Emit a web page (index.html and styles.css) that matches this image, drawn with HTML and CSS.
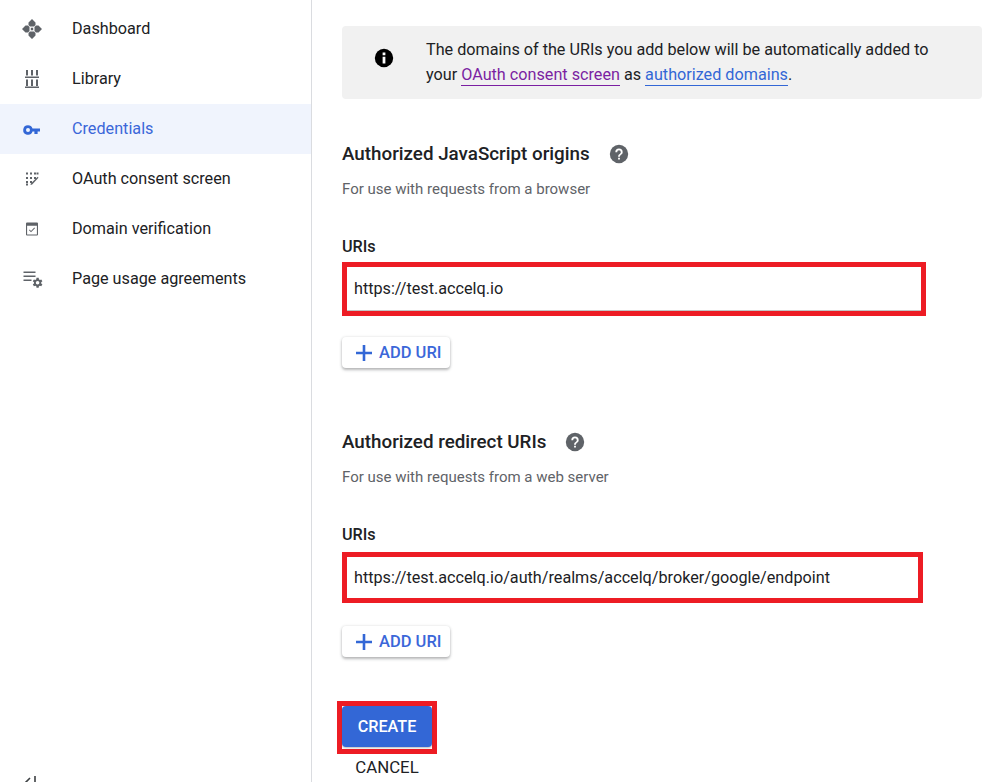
FILE: index.html
```html
<!DOCTYPE html>
<html lang="en">
<head>
<meta charset="utf-8">
<title>Create OAuth client</title>
<link rel="stylesheet" href="styles.css">
</head>
<body>
<div class="page">
  <nav class="sidebar">
    <ul class="nav-list">
      <li class="nav-item">
        <svg class="nav-icon" viewBox="0 0 24 24"><path d="M12 2l3.500 3.500V8l-1.500 1.500h-4L8.500 8V5.500zM12 22l-3.500-3.500V16l1.500-1.500h4l1.500 1.500v2.500zM2 12l3.500-3.500H8l1.500 1.500v4L8 15.500H5.500zM22 12l-3.500 3.500H16L14.500 14v-4L16 8.500h2.500z"/><path d="M10.800 10.800h2.400v2.400h-2.400z"/></svg>
        <span class="nav-label">Dashboard</span>
      </li>
      <li class="nav-item">
        <svg class="nav-icon" viewBox="0 0 24 24"><path d="M6 3h2v5.500H6zM11 3h2v5.500h-2zM16 3h2v5.500h-2zM5 9.500h14V11H5zM6 12.500h2V19H6zM11 12.500h2V19h-2zM16 12.500h2V19h-2zM5 19.500h14V21H5z"/></svg>
        <span class="nav-label">Library</span>
      </li>
      <li class="nav-item nav-item-active">
        <svg class="nav-icon" viewBox="0 0 24 24"><path d="M12.650 10A6 6 0 0 0 7 6a6 6 0 1 0 5.650 8H15v3h4v-3h3v-4H12.650zM7 14.500a2.500 2.500 0 1 1 0-5 2.500 2.500 0 0 1 0 5z" transform="translate(2.400 3.400) scale(.8)"/></svg>
        <span class="nav-label">Credentials</span>
      </li>
      <li class="nav-item">
        <svg class="nav-icon" viewBox="0 0 24 24"><path d="M6 5.500h2v2H6zM10 5.500h2v2h-2zM14 5.500h2v2h-2zM16.500 5.500h2v2h-2zM6 10h2v2H6zM10 10h2v2h-2zM14 10h2v2h-2zM6 14h2v2H6zM10 14h2v2h-2zM6 16.500h2v2H6z"/><path d="M17.600 9.800l.9.900-6.300 6.800-1.700.6.400-1.700z"/></svg>
        <span class="nav-label">OAuth consent screen</span>
      </li>
      <li class="nav-item">
        <svg class="nav-icon" viewBox="0 0 24 24"><path d="M7 5.500h10a1 1 0 0 1 1 1v11a1 1 0 0 1-1 1H7a1 1 0 0 1-1-1v-11a1 1 0 0 1 1-1zm.100 3.300v8.600h9.800V8.800z"/><path d="M11 15.300l-2-2 .7-.7 1.300 1.300 3.300-3.300.7.700z"/></svg>
        <span class="nav-label">Domain verification</span>
      </li>
      <li class="nav-item">
        <svg class="nav-icon" viewBox="0 0 24 24"><path d="M3.500 4.500h12V6h-12zM3.500 8.500h12V10h-12zM3.500 12.500h8V14h-8z"/><path d="M21.200 16.400l1.200.9-1.100 1.900-1.400-.5-1 .6-.2 1.500h-2.200l-.2-1.500-1-.6-1.400.5-1.100-1.900 1.200-.9v-1.200l-1.200-.9 1.100-1.900 1.400.5 1-.6.2-1.500h2.200l.2 1.500 1 .6 1.400-.5 1.100 1.900-1.200.9zM17.600 17.600a1.800 1.800 0 1 0 0-3.600 1.800 1.800 0 0 0 0 3.600z"/></svg>
        <span class="nav-label">Page usage agreements</span>
      </li>
    </ul>
    <svg class="collapse-icon" viewBox="0 0 16 16"><path d="M8 2L3 7l5 5M13 0v14" fill="none" stroke="#3c4043" stroke-width="1.600"/></svg>
  </nav>
  <main class="content">
    <div class="notice">
      <svg class="notice-icon" viewBox="0 0 24 24"><circle cx="12" cy="12" r="10" fill="#000"/><path d="M10.500 10.500h3V18h-3zM10.500 6h3v3h-3z" fill="#fff"/></svg>
      <p class="notice-text">The domains of the URIs you add below will be automatically added to your <a class="link link-visited">OAuth consent screen</a> as <a class="link">authorized domains</a>.</p>
    </div>

    <section class="section section-origins">
      <h2 class="section-title">Authorized JavaScript origins
        <svg class="help-icon" viewBox="0 0 24 24"><circle cx="12" cy="12" r="10" fill="#5f6368"/><path d="M11 16h2v2h-2zM12 6a4 4 0 0 0-4 4h2a2 2 0 1 1 4 0c0 2-3 1.800-3 5h2c0-2.300 3-2.500 3-5a4 4 0 0 0-4-4z" fill="#fff"/></svg>
      </h2>
      <p class="section-hint">For use with requests from a browser</p>
      <label class="field-label">URIs</label>
      <div class="uri-box uri-box-first"><div class="uri-input">https://test.accelq.io</div></div>
      <button class="add-btn" type="button"><svg class="plus" viewBox="0 0 16 16"><path d="M6.700 0h2.600v6.700H16v2.600H9.300V16H6.700V9.300H0V6.700h6.700z"/></svg>ADD URI</button>
    </section>

    <section class="section section-redirect">
      <h2 class="section-title">Authorized redirect URIs
        <svg class="help-icon" viewBox="0 0 24 24"><circle cx="12" cy="12" r="10" fill="#5f6368"/><path d="M11 16h2v2h-2zM12 6a4 4 0 0 0-4 4h2a2 2 0 1 1 4 0c0 2-3 1.800-3 5h2c0-2.300 3-2.500 3-5a4 4 0 0 0-4-4z" fill="#fff"/></svg>
      </h2>
      <p class="section-hint">For use with requests from a web server</p>
      <label class="field-label">URIs</label>
      <div class="uri-box uri-box-second"><div class="uri-input">https://test.accelq.io/auth/realms/accelq/broker/google/endpoint</div></div>
      <button class="add-btn" type="button"><svg class="plus" viewBox="0 0 16 16"><path d="M6.700 0h2.600v6.700H16v2.600H9.300V16H6.700V9.300H0V6.700h6.700z"/></svg>ADD URI</button>
    </section>

    <div class="actions">
      <div class="create-frame"><button class="create-btn" type="button">CREATE</button></div>
      <button class="cancel-btn" type="button">CANCEL</button>
    </div>
  </main>
</div>
</body>
</html>
```
FILE: styles.css
```css
* { box-sizing: border-box; }
html, body { margin: 0; height: 782px; overflow: hidden; background: #fff; }
body { font-family: Roboto, "Liberation Sans", sans-serif; font-size: 16.2px; color: #202124; }
.page { display: flex; height: 782px; overflow: hidden; }

.sidebar { position: relative; flex: 0 0 312px; border-right: 1px solid #dadce0; padding-top: 4px; }
.nav-list { list-style: none; margin: 0; padding: 0; }
.nav-item { display: flex; align-items: center; height: 50px; padding-left: 20px; color: #202124; }
.nav-item-active { background: #f0f4fd; color: #3b67d9; }
.nav-label { padding-bottom: 2px; }
.nav-icon { flex: 0 0 24px; width: 24px; height: 24px; margin-right: 28px; fill: #5f6368; }
.nav-item-active .nav-icon { fill: #3367d6; }
.collapse-icon { position: absolute; left: 22px; top: 776px; width: 16px; height: 16px; }

.content { flex: 1; padding: 26px 15px 0 30px; }
.notice { display: flex; align-items: center; height: 73px; background: #f1f1f1; border-radius: 4px; padding-left: 31px; }
.notice-icon { flex: 0 0 22px; width: 22px; height: 22px; margin: 0 31px 9px 0; }
.notice-text { margin: 0 0 2px; width: 530px; line-height: 25px; color: #202124; }
.link { color: #3367d6; border-bottom: 1px solid #3367d6; padding-bottom: 1px; }
.link-visited { color: #7b1fa2; border-bottom-color: #7b1fa2; }

.section-origins { margin-top: 42px; }
.section-redirect { margin-top: 61px; }
.section-title { display: flex; align-items: center; margin: 0; height: 26px; font-size: 18.8px; font-weight: 500; line-height: 26px; color: #202124; }
.help-icon { width: 22px; height: 22px; margin-left: 18px; }
.section-redirect .help-icon { margin-left: 18px; }
.section-hint { margin: 12px 0 0; font-size: 15px; line-height: 20px; color: #5f6368; }
.field-label { display: block; margin-top: 38px; font-size: 16.200px; font-weight: 500; line-height: 20px; color: #202124; }
.uri-box { margin-top: 5px; border: 5px solid #ed1c24; background: #fff; }
.uri-box-first { width: 584px; height: 54px; }
.uri-box-second { width: 581px; height: 51px; margin-top: 7px; }
.uri-input { height: 100%; padding: 0 7px; display: flex; align-items: center; font-size: 16.200px; color: #202124; border-bottom: 1px solid #c4c4c4; }
.uri-box-second .uri-input { border-bottom: 0; }
.add-btn { display: flex; align-items: center; margin-top: 21px; width: 108px; height: 31px; padding: 0 0 0 14px; border: 0; border-radius: 4px; background: #fff; box-shadow: 0 2px 3px rgba(60,64,67,.35), 0 0 3px rgba(60,64,67,.15); font: 500 16.500px Roboto, sans-serif; color: #3b67d9; }
.plus { width: 16px; height: 16px; margin-right: 7px; fill: #3367d6; }
.section-redirect .add-btn { margin-top: 23px; }

.actions { display: flex; flex-direction: column; align-items: flex-start; margin: 44px 0 0 -5px; }
.create-frame { width: 100px; height: 53px; border: 5px solid #ed1c24; background: #fff; padding: 0; }
.create-btn { display: block; width: 90px; height: 41px; border: 0; border-radius: 4px; background: #3367d6; box-shadow: 0 1px 2px rgba(60,64,67,.35); color: #fff; font: 500 16.200px Roboto, sans-serif; padding: 0; }
.cancel-btn { width: 100px; height: 26px; margin-top: 0; padding: 0; border: 0; background: transparent; font: 400 16.800px Roboto, sans-serif; color: #202124; text-align: center; }
```
